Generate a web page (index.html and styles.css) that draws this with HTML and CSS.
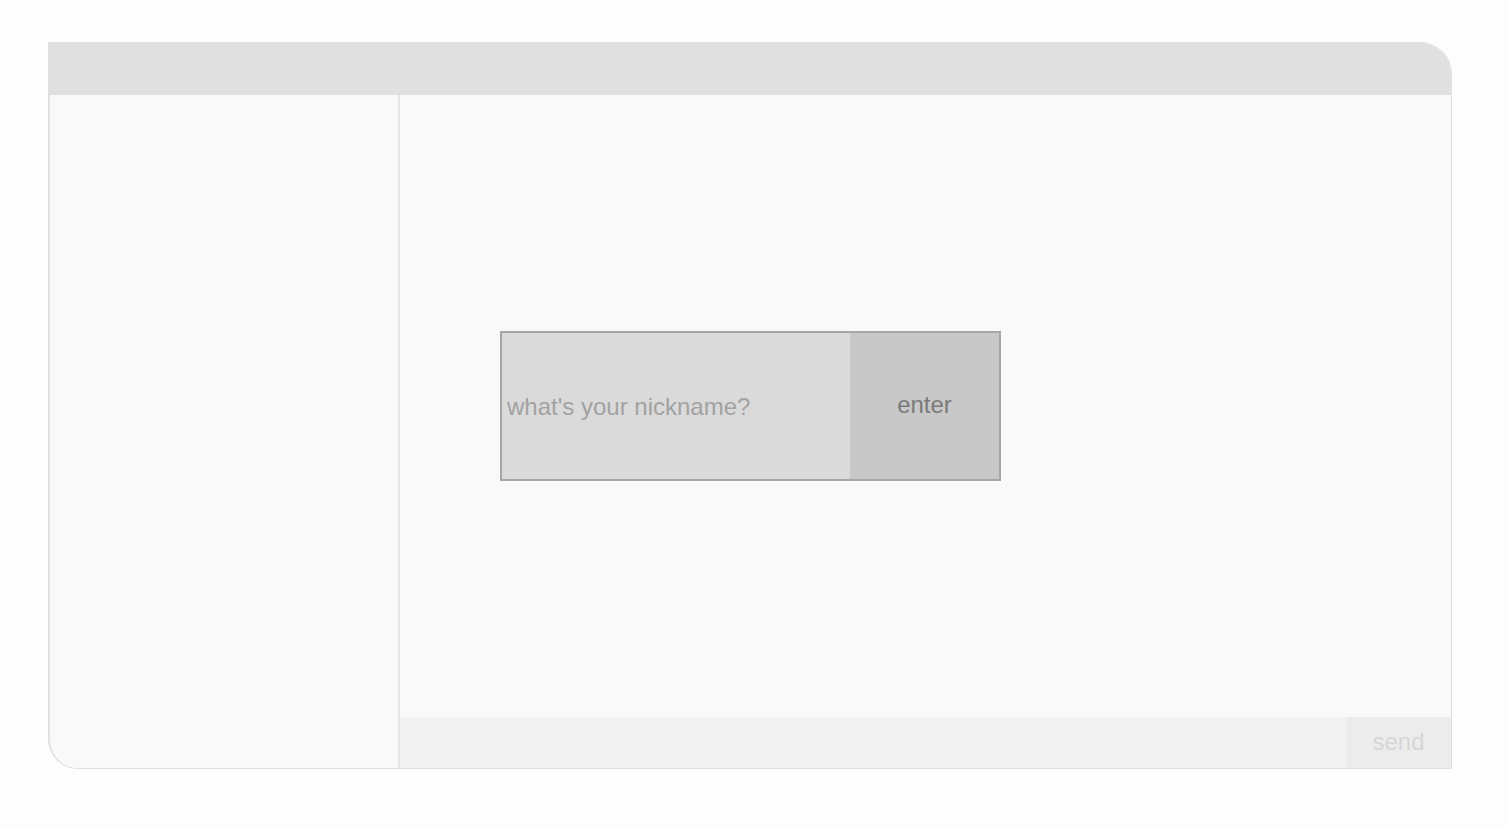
FILE: index.html
```html
<!DOCTYPE html>
<html>
<head>
<meta charset="utf-8">
<link rel="stylesheet" href="styles.css">
</head>
<body>
<div class="window">
  <div class="header"></div>
  <div class="body">
    <aside class="sidebar"></aside>
    <main class="main">
      <div class="content">
        <form class="nick">
          <input class="nick-input" type="text" placeholder="what's your nickname?">
          <button class="nick-btn" type="button">enter</button>
        </form>
      </div>
      <div class="composer">
        <input class="msg-input" type="text">
        <button class="send-btn" type="button">send</button>
      </div>
    </main>
  </div>
</div>
</body>
</html>
```
FILE: styles.css
```css
html, body {
  margin: 0;
  padding: 0;
  background: #fdfdfd;
  font-family: "Liberation Sans", Arial, sans-serif;
}
body {
  padding: 42px 0 0 48px;
}
.window {
  box-sizing: border-box;
  width: 1404px;
  height: 727px;
  border: 1px solid #e0e0e0;
  border-left-width: 2px;
  border-radius: 0 32px 0 30px;
  overflow: hidden;
  background: #f9f9f9;
  display: flex;
  flex-direction: column;
}
.header {
  height: 52px;
  background: #e0e0e0;
  flex: none;
}
.body {
  flex: 1;
  display: flex;
  min-height: 0;
}
.sidebar {
  width: 348px;
  flex: none;
  border-right: 2px solid #e4e4e4;
  background: #f9f9f9;
}
.main {
  flex: 1;
  display: flex;
  flex-direction: column;
}
.content {
  flex: 1;
  display: flex;
  align-items: center;
  padding-left: 100px;
}
.nick {
  display: flex;
  width: 501px;
  height: 150px;
  box-sizing: border-box;
  border: 2px solid #a6a6a6;
  margin: 0;
}
.nick-input {
  flex: none;
  width: 348px;
  border: none;
  outline: none;
  background: #dadada;
  font-family: inherit;
  font-size: 24px;
  color: #777;
  padding: 2px 0 0 5px;
  margin: 0;
  box-sizing: border-box;
}
.nick-input::placeholder {
  color: #a2a2a2;
}
.nick-btn {
  flex: 1;
  border: none;
  background: #c8c8c8;
  color: #7a7a7a;
  font-family: inherit;
  font-size: 24px;
  margin: 0;
  padding: 0 0 2px 0;
}
.composer {
  height: 51px;
  flex: none;
  display: flex;
  background: #f2f2f2;
}
.msg-input {
  flex: 1;
  border: none;
  outline: none;
  background: #f2f2f2;
  margin: 0;
}
.send-btn {
  width: 105px;
  flex: none;
  border: none;
  background: #ececec;
  color: #d6d6d6;
  font-family: inherit;
  font-size: 24px;
  margin: 0;
  padding: 0 0 2px 0;
}
```
